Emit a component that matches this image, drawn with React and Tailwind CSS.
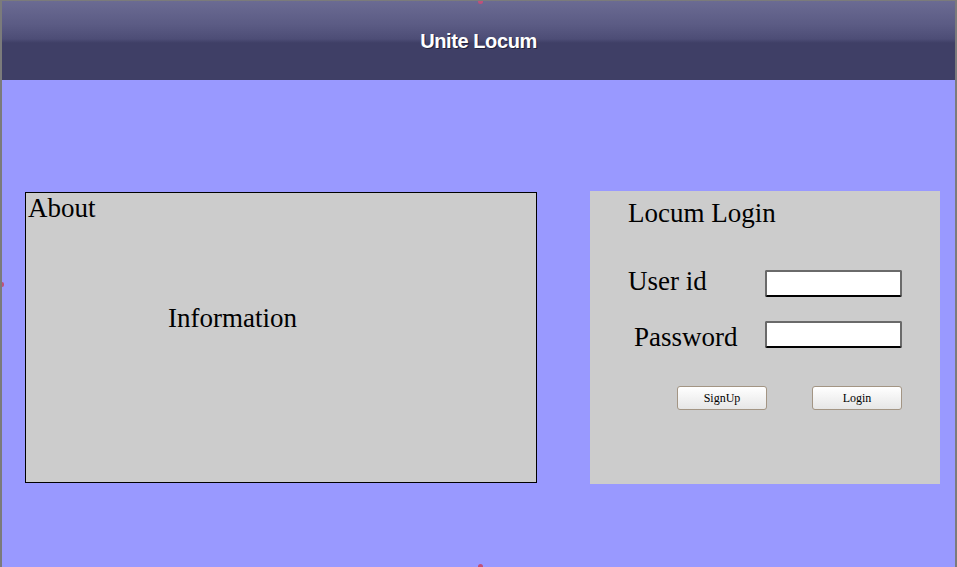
import React from 'react';

const serif = { fontFamily: '"Liberation Serif", "Times New Roman", serif' };

export default function App() {
  return (
    <div className="relative h-[567px] w-[957px] overflow-hidden border-x-2 border-t border-[#7b7b7b] bg-[#9999ff]">
      {/* header */}
      <div className="flex h-[79px] items-center justify-center bg-[linear-gradient(to_bottom,#6b6b93_0%,#5b5b84_30%,#4d4d76_48%,#3f3f66_53%,#3f3f66_100%)]">
        <span className="text-[20px] font-bold tracking-[-0.4px] text-white [text-shadow:1px_1px_0_#22223a]" style={{ fontFamily: '"Liberation Sans", Arial, sans-serif' }}>
          Unite Locum
        </span>
      </div>

      {/* content */}
      <div className="flex items-start gap-[53px] pl-[23px] pt-[111px]" style={serif}>
        <AboutBox />
        <LoginPanel />
      </div>

      {/* little handle marks on the frame */}
      <span className="absolute left-[476px] top-0 h-[3px] w-[5px] rounded-b-full bg-[#c0507a]" />
      <span className="absolute bottom-0 left-[476px] h-[3px] w-[5px] rounded-t-full bg-[#c0507a]" />
      <span className="absolute left-0 top-[281px] h-[5px] w-[2px] rounded-r-full bg-[#c0507a]" />
    </div>
  );
}

function AboutBox() {
  return (
    <div className="mt-[1px] h-[291px] w-[512px] border border-black bg-[#cccccc]">
      <div className="pl-[2px] text-[27px] leading-[31px] text-black">About</div>
      <div className="mt-[79px] pl-[142px] text-[27px] leading-[31px] text-black">Information</div>
    </div>
  );
}

function LoginPanel() {
  return (
    <div className="h-[293px] w-[350px] bg-[#cccccc] pt-[7px]">
      <div className="pl-[38px] text-[27px] leading-[31px] text-black">Locum Login</div>

      <div className="mt-[37px] flex items-start pl-[38px]">
        <span className="w-[137px] text-[27px] leading-[31px] text-black">User id</span>
        <Field />
      </div>

      <div className="mt-[25px] flex items-start pl-[44px]">
        <span className="w-[131px] text-[27px] leading-[31px] text-black">Password</span>
        <Field password />
      </div>

      <div className="mt-[33px] flex gap-[45px] pl-[87px]">
        <Btn label="SignUp" />
        <Btn label="Login" />
      </div>
    </div>
  );
}

function Field({ password }) {
  return (
    <input
      type={password ? 'password' : 'text'}
      className={`${password ? 'mt-[-1px]' : 'mt-[4px]'} h-[27px] w-[137px] rounded-[2px] border-2 border-[#6a6a6a] border-b-black bg-white px-1 text-sm outline-none`}
    />
  );
}

function Btn({ label }) {
  return (
    <button className="h-[24px] w-[90px] rounded-[3px] border border-[#a39584] bg-[linear-gradient(to_bottom,#ffffff,#e6e6e6)] text-[12px] leading-none text-black">
      {label}
    </button>
  );
}
